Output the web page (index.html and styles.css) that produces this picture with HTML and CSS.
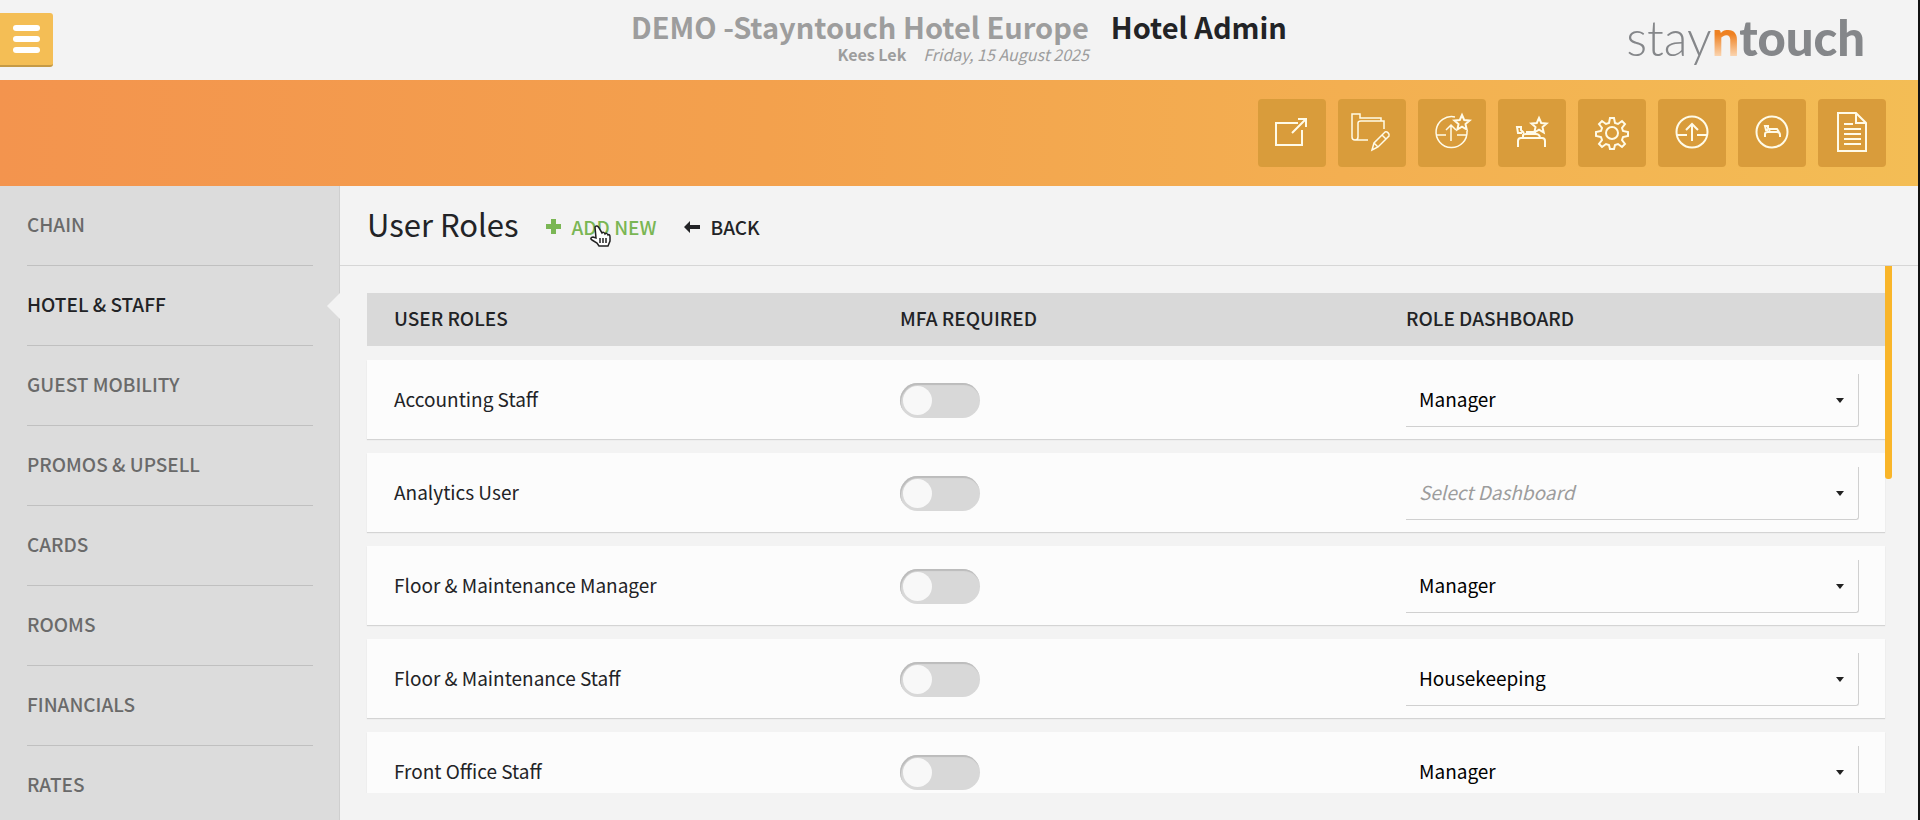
FILE: index.html
```html
<!DOCTYPE html>
<html lang="en">
<head>
  <meta charset="UTF-8">
  <meta name="viewport" content="width=device-width, initial-scale=1.0">
  <link rel="stylesheet" href="styles.css">
  <title>Hotel Admin</title>
</head>
<body>
  <header class="header">
    <button class="menu-button" aria-label="Menu">
      <span class="bar"></span>
      <span class="bar"></span>
      <span class="bar"></span>
    </button>
    <div class="heading">
      <div class="hotel">
        <div class="hotel-name">DEMO -Stayntouch Hotel Europe</div>
        <div class="hotel-info"><b>Kees Lek</b><i>Friday, 15 August 2025</i></div>
      </div>
      <h1 class="page-name">Hotel Admin</h1>
    </div>
    <div class="logo">stay<span class="logo-n">n</span><span class="logo-bold">touch</span></div>
  </header>

  <div class="toolbar">
    <button class="tool" aria-label="Open">
      <svg viewBox="0 0 40 40"><path d="M26 10H4v22h26V17"/><path d="M20 20L34 6M26 6h8v8"/></svg>
    </button>
    <button class="tool" aria-label="Edit folder">
      <svg viewBox="0 0 40 40" class="thin"><path d="M16 27H3c-2 0-3-1-3-3V1h8v4h21v3h3v8M9 8c-2 0-3 1-3 2v14c0 2-1 3-3 3M9 8h23"/><path d="M20 37l2-7 11-11c2-1 5 2 4 4L26 34zM22 30l4 4M30 22l4 4"/></svg>
    </button>
    <button class="tool" aria-label="Upgrade">
      <svg viewBox="0 0 40 40" class="thin">
        <path d="M23 4A15.500 15.500 0 1 0 35 18M4 22h10M25 22h10M19 28V12M14 17l5-5 5 5"/>
        <path class="star" d="M30 2l2.200 5 5.400.500-4.100 3.600 1.200 5.400-4.700-2.800-4.700 2.800 1.200-5.400-4.100-3.600 5.400-.500z"/>
      </svg>
    </button>
    <button class="tool" aria-label="Room upgrade">
      <svg viewBox="0 0 40 40">
        <path d="M6 34v-6q0-3 3-3h21q3 0 3 3v6M11 24v-2q0-1 3-1h10q3 0 4 3M14 19h10M10 20H6l-1-6h4v3l3 3"/>
        <path class="star" transform="translate(-3 3)" d="M30 2l2.200 5 5.400.500-4.100 3.600 1.200 5.400-4.700-2.800-4.700 2.800 1.200-5.400-4.100-3.600 5.400-.500z"/>
      </svg>
    </button>
    <button class="tool" aria-label="Settings">
      <svg viewBox="0 0 40 40"><circle cx="20" cy="20" r="6"/><path d="M18 5h4l1 5 3 1 4-3 3 3-3 4 1 3 5 1v4l-5 1-1 3 3 4-3 3-4-3-3 1-1 4h-4l-1-4-3-1-4 3-3-3 3-4-1-3-5-1v-4l5-1 1-3-3-4 3-3 4 3 3-1z"/></svg>
    </button>
    <button class="tool" aria-label="Upload">
      <svg viewBox="0 0 40 40"><circle cx="20" cy="19" r="15.500"/><path d="M5 22h10M25 22h10M20 28V11M14 17l6-6 6 6"/></svg>
    </button>
    <button class="tool" aria-label="Rooms">
      <svg viewBox="0 0 40 40"><circle cx="20" cy="19" r="15.500"/><path d="M13 24v-3q0-2 3-2h9q3 0 3 3v2M17 18l1-2h7l2 3M16 17h-2l-1-4h3v2l2 2"/></svg>
    </button>
    <button class="tool" aria-label="Reports">
      <svg viewBox="0 0 40 40"><path d="M6 0h18l10 10v28H6zM24 0v10h10M12 11h9M12 16h17M12 21h17M12 26h17M12 31h17"/></svg>
    </button>
  </div>

  <div class="page">
    <nav class="sidebar">
      <a class="nav-item" href="#">CHAIN</a>
      <a class="nav-item active" href="#">HOTEL &amp; STAFF</a>
      <a class="nav-item" href="#">GUEST MOBILITY</a>
      <a class="nav-item" href="#">PROMOS &amp; UPSELL</a>
      <a class="nav-item" href="#">CARDS</a>
      <a class="nav-item" href="#">ROOMS</a>
      <a class="nav-item" href="#">FINANCIALS</a>
      <a class="nav-item" href="#">RATES</a>
    </nav>

    <main class="content">
      <div class="content-header">
        <h2 class="title">User Roles</h2>
        <button class="action add">
          <svg width="15" height="15" viewBox="0 0 15 15"><path d="M5 0h5v5h5v5h-5v5H5v-5H0V5h5z"/></svg>
          ADD NEW
          <svg class="pointer" width="21" height="23" viewBox="0 0 21 23"><path d="M5 2c1-2 3-1 4 1l3 5c1-1 2-1 3 1 1-1 2-1 3 1 1-1 2 0 2 2v4l-2 5H9l-2-3-5-3c-2-1-1-3 1-3l3 1z"/><path d="M10 13v5M13 13v5M16 13v5"/></svg>
        </button>
        <button class="action back">
          <svg width="16" height="12" viewBox="0 0 16 12"><path d="M0 6l6-6v4h10v4H6v4z"/></svg>
          BACK
        </button>
      </div>

      <div class="scroll-area">
        <table class="roles">
          <thead>
            <tr><th>USER ROLES</th><th>MFA REQUIRED</th><th>ROLE DASHBOARD</th></tr>
          </thead>
          <tbody>
            <tr>
              <td class="name">Accounting Staff</td>
              <td><input class="switch" type="checkbox" aria-label="MFA required for Accounting Staff"></td>
              <td><div class="select"><select aria-label="Dashboard for Accounting Staff"><option>Manager</option></select></div></td>
            </tr>
            <tr>
              <td class="name">Analytics User</td>
              <td><input class="switch" type="checkbox" aria-label="MFA required for Analytics User"></td>
              <td><div class="select"><select class="placeholder" aria-label="Dashboard for Analytics User"><option>Select Dashboard</option></select></div></td>
            </tr>
            <tr>
              <td class="name">Floor &amp; Maintenance Manager</td>
              <td><input class="switch" type="checkbox" aria-label="MFA required for Floor &amp; Maintenance Manager"></td>
              <td><div class="select"><select aria-label="Dashboard for Floor &amp; Maintenance Manager"><option>Manager</option></select></div></td>
            </tr>
            <tr>
              <td class="name">Floor &amp; Maintenance Staff</td>
              <td><input class="switch" type="checkbox" aria-label="MFA required for Floor &amp; Maintenance Staff"></td>
              <td><div class="select"><select aria-label="Dashboard for Floor &amp; Maintenance Staff"><option>Housekeeping</option></select></div></td>
            </tr>
            <tr>
              <td class="name">Front Office Staff</td>
              <td><input class="switch" type="checkbox" aria-label="MFA required for Front Office Staff"></td>
              <td><div class="select"><select aria-label="Dashboard for Front Office Staff"><option>Manager</option></select></div></td>
            </tr>
          </tbody>
        </table>
        <div class="scroll-thumb"></div>
      </div>
    </main>
  </div>
</body>
</html>
```

FILE: styles.css
```css
* {
  box-sizing: border-box;
}

body {
  font-family: "Noto Sans CJK SC", "Noto Sans", sans-serif;
  font-size: 19px;
  line-height: 28px;
  margin: 0;
  height: 100vh;
  display: flex;
  flex-direction: column;
  overflow: hidden;
  color: #222326;
  background-color: #f3f3f3;
  border-right: 2px solid #111;
}

button,
select {
  font: inherit;
  color: inherit;
  border: none;
  padding: 0;
  cursor: pointer;
}

/* top header */
.header {
  display: grid;
  grid-template-columns: 1fr auto 1fr;
  align-items: center;
  height: 80px;
}

.menu-button {
  display: flex;
  flex-direction: column;
  align-items: flex-end;
  justify-content: center;
  gap: 5px;
  width: 53px;
  height: 54px;
  padding-right: 13px;
  background-color: #f4be55;
  border-bottom: 2px solid #c59a45;
  border-radius: 0 3px 3px 0;
}

.bar {
  width: 27px;
  height: 6px;
  border-radius: 3px;
  background-color: #fff;
}

.heading {
  display: flex;
  gap: 22px;
  height: 60px;
}

.hotel {
  color: #9d9d9d;
  text-align: right;
}

.hotel-name,
.page-name {
  margin: 0;
  font-size: 29px;
  font-weight: bold;
  line-height: 32px;
}

.hotel-info {
  font-size: 16px;
  line-height: 24px;
}

.hotel-info b {
  margin-right: 17px;
}

.logo {
  justify-self: end;
  margin-right: 53px;
  padding-bottom: 6px;
  font-family: Lato, sans-serif;
  font-size: 49px;
  font-weight: 300;
  line-height: 60px;
  color: #85878a;
}

.logo-n {
  font-weight: 900;
  color: transparent;
  background: linear-gradient(#ee8122 45%, #fbd9b8 85%);
  -webkit-background-clip: text;
  background-clip: text;
}

.logo-bold {
  font-weight: 900;
}

/* orange toolbar */
.toolbar {
  display: flex;
  justify-content: flex-end;
  align-items: center;
  gap: 12px;
  height: 106px;
  padding-right: 32px;
  background: linear-gradient(to right, #f3944e, #f3a14d 40%, #f3bd55);
}

.tool {
  display: flex;
  align-items: center;
  justify-content: center;
  width: 68px;
  height: 68px;
  border-radius: 4px;
  background-color: #d99c3b;
}

.tool svg {
  width: 40px;
  height: 40px;
  overflow: visible;
  fill: none;
  stroke: #fffbe8;
  stroke-width: 2;
}

.tool .thin {
  stroke-width: 1.5;
}

.tool .star {
  fill: #d99c3b;
  stroke-width: 2;
}

.page {
  flex: 1;
  display: flex;
  min-height: 0;
}

/* left navigation */
.sidebar {
  width: 340px;
  padding: 0 26px 0 27px;
  background-color: #dcdcdc;
  border-right: 1px solid #cfcfcf;
}

.nav-item {
  position: relative;
  display: block;
  height: 80px;
  padding-top: 24px;
  font-weight: 500;
  color: #6a6a6a;
  text-decoration: none;
  border-bottom: 1px solid #c0c0c0;
}

.active {
  color: #222326;
}

.active::after {
  content: "";
  position: absolute;
  top: 27px;
  right: -27px;
  border: 13px solid transparent;
  border-left: none;
  border-right-color: #f3f3f3;
}

/* main content */
.content {
  flex: 1;
  display: flex;
  flex-direction: column;
  min-width: 0;
}

.content-header {
  display: flex;
  align-items: center;
  gap: 27px;
  height: 80px;
  flex-shrink: 0;
  padding: 0 0 3px 27px;
  border-bottom: 1px solid #d6d6d6;
}

.title {
  margin: 0;
  font-size: 31px;
  font-weight: normal;
  line-height: 40px;
}

.action {
  position: relative;
  display: flex;
  align-items: center;
  gap: 11px;
  padding-top: 5px;
  font-weight: 500;
  background: none;
}

.action svg {
  fill: currentColor;
}

.add {
  color: #7ab654;
}

.action .pointer {
  position: absolute;
  top: 17px;
  left: 44px;
  fill: #fff;
  stroke: #222;
  stroke-width: 1.5;
}

.scroll-area {
  position: relative;
  flex: 1;
  min-height: 0;
  margin-bottom: 27px;
  padding: 13px 33px 0 27px;
  overflow: hidden;
}

.scroll-thumb {
  position: absolute;
  top: 0;
  right: 26px;
  width: 7px;
  height: 213px;
  border-radius: 0 0 3px 3px;
  background-color: #f9b529;
}

.roles {
  width: 100%;
  table-layout: fixed;
  border-collapse: separate;
  border-spacing: 0 14px;
}

.roles th {
  height: 53px;
  padding: 0 27px 4px;
  font-weight: 500;
  text-align: left;
  background-color: #d9d9d9;
}

.roles tbody tr {
  background-color: #fcfcfc;
  box-shadow: 0 1px 1px #d4d4d4;
}

.roles td {
  height: 79px;
  padding: 1px 26px 0 27px;
}

.roles .name {
  padding-bottom: 3px;
}

.switch {
  appearance: none;
  display: block;
  width: 80px;
  height: 35px;
  margin: 0;
  padding: 3px;
  border-radius: 18px;
  background-color: #d8d8d8;
  box-shadow: inset 1px 2px 1px #bcbcbc;
  cursor: pointer;
}

.switch::before {
  content: "";
  display: block;
  width: 29px;
  height: 29px;
  border-radius: 50%;
  background-color: #f8f8f8;
}

.switch:checked::before {
  margin-left: auto;
}

.select {
  position: relative;
}

.select::after {
  content: "";
  position: absolute;
  top: 24px;
  right: 15px;
  border: 4px solid transparent;
  border-top: 5px solid #222;
  border-bottom: none;
  pointer-events: none;
}

.select select {
  appearance: none;
  display: block;
  width: 100%;
  height: 53px;
  padding: 0 0 2px 13px;
  color: #000;
  background: none;
  border-right: 1px solid #d0d0d0;
  border-bottom: 1px solid #d0d0d0;
  border-radius: 0 0 3px 0;
}

.select .placeholder {
  color: #9d9d9d;
  font-style: italic;
}
```
